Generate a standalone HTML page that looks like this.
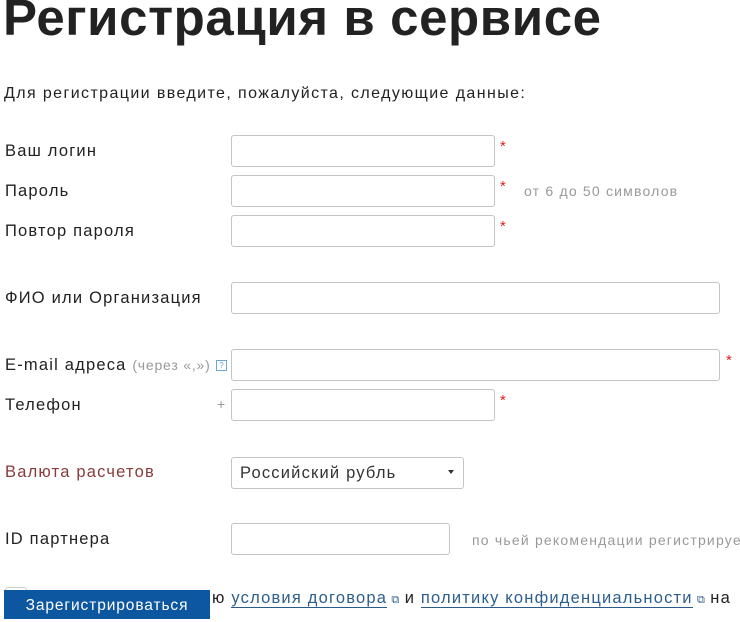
<!DOCTYPE html>
<html><head><meta charset="utf-8"><style>
body{margin:0;width:740px;height:619px;overflow:hidden;background:#fff;font-family:"Liberation Sans","Noto Sans CJK SC",sans-serif;color:#222;position:relative}
.a{position:absolute;white-space:nowrap}
h1{position:absolute;left:3px;top:-12px;margin:0;font-size:51px;font-weight:bold;color:#222;letter-spacing:0.6px;white-space:nowrap}
.l{font-size:16.5px;color:#222;letter-spacing:1.2px}
.i{position:absolute;height:30px;border:1px solid #c4c4c4;border-radius:3px;background:#fff}
.s{color:#d22;font-size:15px}
.g{color:#999;font-size:14px;letter-spacing:1.2px}
u{text-decoration:none;border-bottom:1px solid #2a5a8a;color:#2c5e8e}
</style></head><body>
<h1>Регистрация в сервисе</h1>
<div class="a l" style="left:4px;top:85px;font-size:16px;letter-spacing:1.4px">Для регистрации введите, пожалуйста, следующие данные:</div>

<div class="a l" style="left:5px;top:142px">Ваш логин</div>
<div class="i" style="left:231px;top:135px;width:262px"></div>
<div class="a s" style="left:500px;top:138px">*</div>

<div class="a l" style="left:5px;top:182px">Пароль</div>
<div class="i" style="left:231px;top:175px;width:262px"></div>
<div class="a s" style="left:500px;top:178px">*</div>
<div class="a g" style="left:524px;top:183px">от 6 до 50 символов</div>

<div class="a l" style="left:5px;top:222px">Повтор пароля</div>
<div class="i" style="left:231px;top:215px;width:262px"></div>
<div class="a s" style="left:500px;top:218px">*</div>

<div class="a l" style="left:5px;top:289px">ФИО или Организация</div>
<div class="i" style="left:231px;top:282px;width:487px"></div>

<div class="a l" style="left:5px;top:356px">E-mail адреса <span class="g" style="letter-spacing:0.8px">(через «,»)</span></div>
<div class="a" style="left:216px;top:360px;width:9px;height:9px;border:1px solid #6aa8d8;font-size:8px;line-height:9px;text-align:center;color:#6aa8d8">?</div>
<div class="i" style="left:231px;top:349px;width:487px"></div>
<div class="a s" style="left:726px;top:352px">*</div>

<div class="a l" style="left:5px;top:396px">Телефон</div>
<div class="a g" style="left:217px;top:396px">+</div>
<div class="i" style="left:231px;top:389px;width:262px"></div>
<div class="a s" style="left:500px;top:392px">*</div>

<div class="a l" style="left:5px;top:463px;color:#8b3a3a">Валюта расчетов</div>
<div class="i" style="left:231px;top:457px;width:231px"></div>
<div class="a l" style="left:240px;top:464px;color:#333">Российский рубль</div>
<div class="a" style="left:448px;top:470px;border-left:3px solid transparent;border-right:3px solid transparent;border-top:4px solid #333"></div>

<div class="a l" style="left:5px;top:530px">ID партнера</div>
<div class="i" style="left:231px;top:523px;width:217px"></div>
<div class="a g" style="left:472px;top:532px">по чьей рекомендации регистрируетесь</div>

<div class="a" style="left:5px;top:587px;width:20px;height:20px;border:1px solid #ccc;border-radius:3px"></div>
<div class="a l" style="left:212px;top:589px">ю <u>условия договора</u><span style="color:#2c5e8e;font-size:11px"> ⧉ </span>и <u>политику конфиденциальности</u><span style="color:#2c5e8e;font-size:11px"> ⧉ </span>на</div>
<div class="a" style="left:4px;top:590px;width:206px;height:29px;background:#0d56a0;color:#fff;font-size:15.5px;letter-spacing:0.9px;line-height:32px;text-align:center">Зарегистрироваться</div>
</body></html>
